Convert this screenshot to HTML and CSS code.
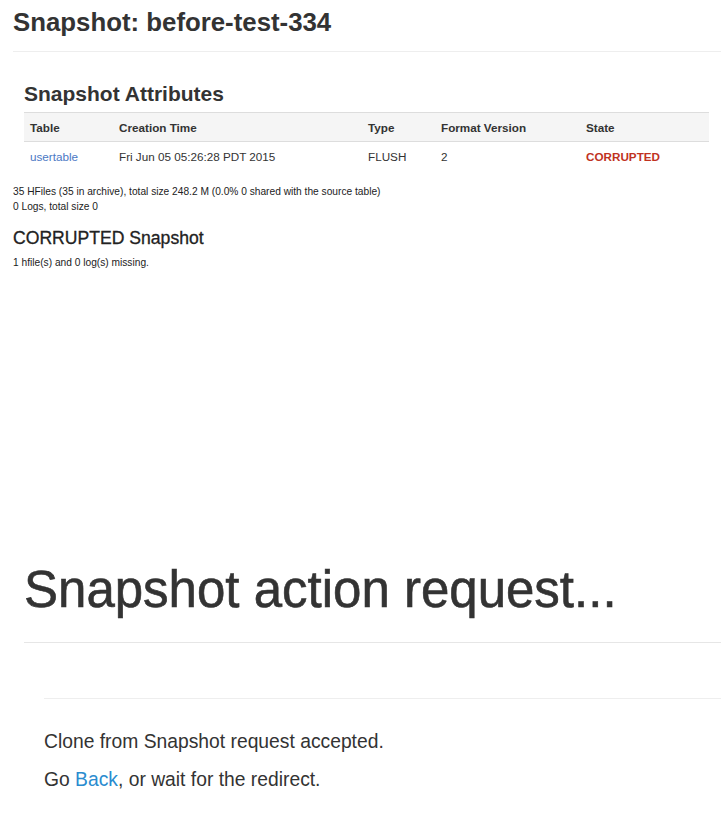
FILE: index.html
```html
<!DOCTYPE html>
<html lang="en">
<head>
<meta charset="utf-8">
<title>Snapshot: before-test-334</title>
<link rel="stylesheet" href="styles.css">
</head>
<body>
<div class="snapshot-page">
  <header class="page-header">
    <h1 class="page-title">Snapshot: before-test-334</h1>
  </header>
  <section class="attrs">
    <h2 class="section-title">Snapshot Attributes</h2>
    <table class="attr-table">
      <thead>
        <tr>
          <th class="col-table">Table</th>
          <th class="col-time">Creation Time</th>
          <th class="col-type">Type</th>
          <th class="col-format">Format Version</th>
          <th class="col-state">State</th>
        </tr>
      </thead>
      <tbody>
        <tr>
          <td><a class="link" href="#">usertable</a></td>
          <td>Fri Jun 05 05:26:28 PDT 2015</td>
          <td>FLUSH</td>
          <td>2</td>
          <td><span class="state-corrupted">CORRUPTED</span></td>
        </tr>
      </tbody>
    </table>
  </section>
  <p class="info">35 HFiles (35 in archive), total size 248.2 M (0.0% 0 shared with the source table)<br>0 Logs, total size 0</p>
  <h3 class="corrupt-title">CORRUPTED Snapshot</h3>
  <p class="info">1 hfile(s) and 0 log(s) missing.</p>
</div>

<div class="action-page">
  <header class="action-header">
    <h1 class="action-title">Snapshot action request...</h1>
  </header>
  <div class="action-body">
    <p class="msg">Clone from Snapshot request accepted.</p>
    <p class="msg">Go <a class="back-link" href="#">Back</a>, or wait for the redirect.</p>
  </div>
</div>
</body>
</html>
```

FILE: styles.css
```css
html, body {
  margin: 0;
  padding: 0;
  background: #ffffff;
}

body {
  font-family: "Liberation Sans", Arial, Helvetica, sans-serif;
  color: #333333;
  width: 721px;
}

.snapshot-page {
  padding-left: 13px;
}

.page-header {
  padding-top: 7px;
  padding-bottom: 14px;
  border-bottom: 1px solid #eeeeee;
}

.page-title {
  margin: 0;
  font-size: 25.8px;
  line-height: 30px;
  font-weight: bold;
  color: #333333;
}

.attrs {
  padding-left: 11px;
  padding-right: 12px;
}

.section-title {
  margin: 30px 0 6px;
  font-size: 21px;
  line-height: 24px;
  font-weight: bold;
  color: #333333;
}

.attr-table {
  width: 100%;
  border-collapse: collapse;
  font-size: 11.7px;
}

.attr-table th,
.attr-table td {
  text-align: left;
  padding: 0 6px;
  height: 28px;
  vertical-align: middle;
}

.attr-table thead tr {
  background: #f5f5f5;
}

.attr-table th {
  font-weight: bold;
  border-top: 1px solid #dddddd;
  border-bottom: 1px solid #dddddd;
}

.col-table { width: 77px; }
.col-time { width: 237px; }
.col-type { width: 61px; }
.col-format { width: 133px; }

.link {
  color: #4b78c4;
  text-decoration: none;
}

.state-corrupted {
  color: #c0321f;
  font-weight: bold;
}

.info {
  margin: 14px 0 0;
  font-size: 10.2px;
  line-height: 15px;
  color: #222222;
}

.corrupt-title {
  margin: 14px 0 0;
  font-size: 17.6px;
  line-height: 20px;
  font-weight: normal;
  color: #222222;
  -webkit-text-stroke: 0.3px #222222;
}

.corrupt-title + .info {
  margin-top: 7px;
}

.action-page {
  margin-top: 292px;
  padding-left: 24px;
}

.action-header {
  border-bottom: 1px solid #e6e6e6;
  padding-bottom: 24px;
}

.action-title {
  margin: 0;
  font-size: 51px;
  line-height: 56px;
  font-weight: normal;
  color: #333333;
  -webkit-text-stroke: 0.6px #333333;
}

.action-body {
  margin-top: 55px;
  margin-left: 20px;
  border-top: 1px solid #eeeeee;
  padding-top: 31px;
}

.msg {
  margin: 0 0 14px;
  font-size: 19.3px;
  line-height: 24px;
  color: #333333;
}

.back-link {
  color: #2a8ccf;
  text-decoration: none;
}
```
